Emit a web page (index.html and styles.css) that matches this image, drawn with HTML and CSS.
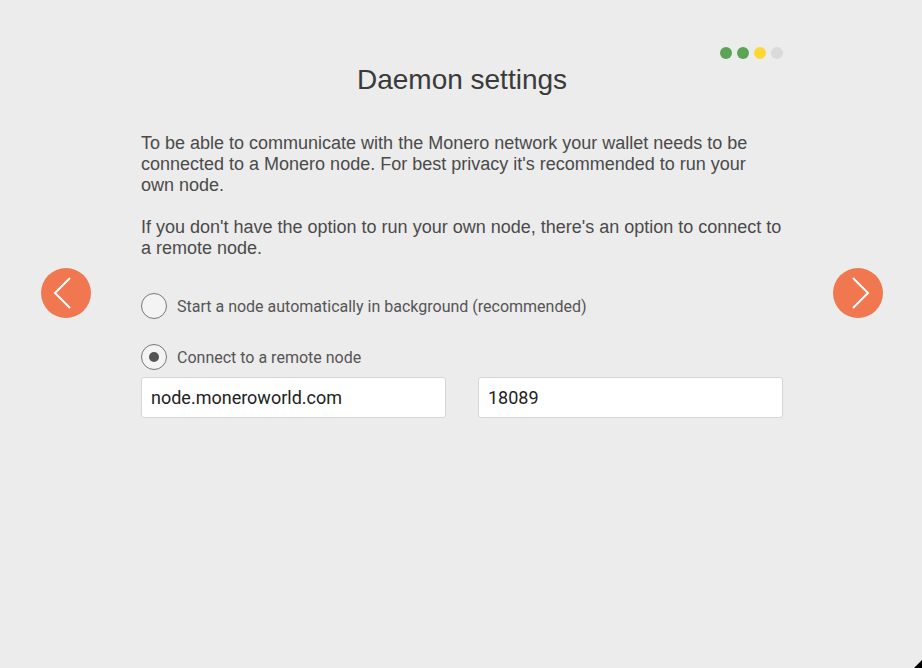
FILE: index.html
```html
<!DOCTYPE html>
<html>
<head>
<meta charset="utf-8">
<link rel="stylesheet" href="styles.css">
</head>
<body>
<div class="page">
  <button class="nav nav-left" aria-label="Back">
    <svg width="50" height="50" viewBox="0 0 50 50"><path d="M29 10 L14 25 L29 40" fill="none" stroke="#fff" stroke-width="2"/></svg>
  </button>
  <button class="nav nav-right" aria-label="Next">
    <svg width="50" height="50" viewBox="0 0 50 50"><path d="M20 10 L35 25 L20 40" fill="none" stroke="#fff" stroke-width="2"/></svg>
  </button>
  <div class="content">
    <div class="dots">
      <span class="dot green"></span><span class="dot green"></span><span class="dot yellow"></span><span class="dot grey"></span>
    </div>
    <h1 class="title">Daemon settings</h1>
    <p class="text">To be able to communicate with the Monero network your wallet needs to be connected to a Monero node. For best privacy it's recommended to run your<br>own node.</p>
    <p class="text">If you don't have the option to run your own node, there's an option to connect to a remote node.</p>
    <div class="option first">
      <span class="radio"></span>
      <span class="label">Start a node automatically in background (recommended)</span>
    </div>
    <div class="option second">
      <span class="radio checked"></span>
      <span class="label">Connect to a remote node</span>
    </div>
    <div class="inputs">
      <div class="field">node.moneroworld.com</div>
      <div class="field">18089</div>
    </div>
  </div>
  <span class="grip"></span>
</div>
</body>
</html>
```
FILE: styles.css
```css
html, body {
  margin: 0;
  padding: 0;
  background: #ececec;
}
.page {
  position: relative;
  width: 922px;
  height: 668px;
  overflow: hidden;
}
.content {
  width: 642px;
  margin-left: 141px;
  padding-top: 47px;
}
.dots {
  display: flex;
  justify-content: flex-end;
  gap: 5px;
}
.dot {
  width: 12px;
  height: 12px;
  border-radius: 50%;
}
.green { background: #5ba456; }
.yellow { background: #fdd835; }
.grey { background: #dadada; }
.title {
  margin: 4px 0 0;
  text-align: center;
  font-family: "Liberation Sans", Arial, sans-serif;
  font-weight: normal;
  font-size: 28px;
  line-height: 34px;
  color: #3a3a3a;
}
.text {
  margin: 36px -8px 0 0;
  font-family: "Liberation Sans", Arial, sans-serif;
  font-size: 18px;
  line-height: 21px;
  color: #4a4a4a;
}
.text + .text {
  margin-top: 21px;
}
.option {
  display: flex;
  align-items: center;
  gap: 10px;
  height: 28px;
}
.option.first { margin-top: 33px; }
.option.second { margin-top: 23px; }
.radio {
  box-sizing: border-box;
  width: 26px;
  height: 26px;
  border: 1.5px solid #777;
  border-radius: 50%;
  background: #f4f4f4;
  display: flex;
  align-items: center;
  justify-content: center;
}
.radio.checked::after {
  content: "";
  width: 10px;
  height: 10px;
  border-radius: 50%;
  background: #555;
}
.label {
  font-family: Roboto, sans-serif;
  font-size: 16px;
  color: #555;
}
.inputs {
  display: flex;
  gap: 32px;
  margin-top: 6px;
}
.field {
  box-sizing: border-box;
  flex: 1;
  height: 41px;
  border: 1px solid #d6d6d6;
  border-radius: 3px;
  background: #fff;
  padding-left: 9px;
  display: flex;
  align-items: center;
  font-family: Roboto, sans-serif;
  font-size: 18px;
  color: #222;
}
.nav {
  position: absolute;
  top: 268px;
  width: 50px;
  height: 50px;
  padding: 0;
  border: none;
  border-radius: 50%;
  background: #f0774f;
  display: flex;
}
.nav-left { left: 41px; }
.nav-right { left: 833px; }
.grip {
  position: absolute;
  right: 0;
  bottom: 0;
  width: 0;
  height: 0;
  border-left: 8px solid transparent;
  border-bottom: 8px solid #000;
}
```
